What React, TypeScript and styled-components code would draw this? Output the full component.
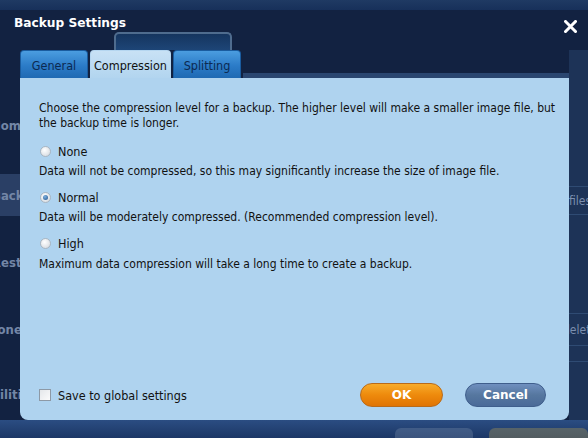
import React from "react";
import styled, { createGlobalStyle } from "styled-components";

const Global = createGlobalStyle`
  html, body { margin: 0; padding: 0; }
  body { width: 588px; height: 438px; overflow: hidden; background: #122241; }
  #root { width: 588px; height: 438px; }
`;

const FONT = `"DejaVu Sans Condensed", "DejaVu Sans", "Liberation Sans", sans-serif`;

/* ---------- background application (behind the dialog) ---------- */
const Page = styled.div`
  position: relative;
  width: 588px;
  height: 438px;
  overflow: hidden;
  background: #122241;
  font-family: ${FONT};
`;

const Backdrop = styled.div`
  display: flex;
  flex-direction: column;
  width: 100%;
  height: 100%;
`;

const AppHeader = styled.div`
  height: 10px;
  flex: none;
  background: linear-gradient(#1f3a63, #17305a);
`;

const AppHeaderGap = styled.div`
  height: 40px;
  flex: none;
  display: flex;
  align-items: flex-end;
`;

const HeaderButton = styled.div`
  margin-left: 114px;
  width: 118px;
  height: 18px;
  box-sizing: border-box;
  border: 2px solid #4f6c8e;
  border-bottom: none;
  border-radius: 5px 5px 0 0;
  background: linear-gradient(#15355f, #1d4577);
`;

const AppBody = styled.div`
  flex: 1;
  display: flex;
  min-height: 0;
`;

const Sidebar = styled.div`
  width: 60px;
  margin-left: -20px;
  flex: none;
  display: flex;
  flex-direction: column;
  padding-top: 55px;
`;

const SideItem = styled.div<{ $active?: boolean; $h: number; $indent?: number }>`
  height: ${(p) => p.$h}px;
  flex: none;
  display: flex;
  align-items: center;
  padding-left: ${(p) => p.$indent ?? 0}px;
  font-size: 13px;
  font-weight: bold;
  color: #7386a6;
  white-space: nowrap;
  background: ${(p) => (p.$active ? "#2a3f65" : "transparent")};
`;

const Main = styled.div`
  flex: 1;
`;

const RightCol = styled.div`
  width: 19px;
  flex: none;
  display: flex;
  flex-direction: column;
  padding-top: 23px;
  background: #1d3357;
`;

const RightRow = styled.div<{ $h: number; $shift?: number }>`
  height: ${(p) => p.$h}px;
  flex: none;
  box-sizing: border-box;
  border-bottom: 1px solid #2f4b73;
  display: flex;
  align-items: center;
  font-size: 12px;
  color: #7b8fae;
  white-space: nowrap;
  overflow: hidden;
  & > span {
    margin-left: ${(p) => p.$shift ?? 0}px;
  }
`;

const AppFooter = styled.div`
  height: 18px;
  flex: none;
  display: flex;
  align-items: flex-end;
  gap: 16px;
  padding-left: 395px;
  background: linear-gradient(#2b4d82, #1c3766);
`;

const FooterBtn = styled.div<{ $tone: string; $w: number }>`
  width: ${(p) => p.$w}px;
  height: 10px;
  border-radius: 6px 6px 0 0;
  background: ${(p) => p.$tone};
`;

/* ---------- dialog ---------- */
const Dialog = styled.div`
  position: absolute;
  inset: 0;
  display: flex;
  flex-direction: column;
  padding: 0 19px 18px 20px;
`;

const TitleBar = styled.div`
  height: 50px;
  flex: none;
  display: flex;
  align-items: flex-start;
  justify-content: space-between;
  padding-top: 15px;
  box-sizing: border-box;
  margin-left: -6px;
  margin-right: -14px;
`;

const Title = styled.div`
  font-family: "DejaVu Sans", sans-serif;
  font-weight: bold;
  font-size: 12.2px;
  line-height: 16px;
  color: #ffffff;
`;

const CloseBtn = styled.div`
  width: 26px;
  height: 26px;
  margin-top: -2px;
  display: flex;
  align-items: center;
  justify-content: center;
`;

const TabRow = styled.div`
  height: 28px;
  flex: none;
  display: flex;
  align-items: flex-end;
  gap: 2px;
  &::after {
    content: "";
    flex: 1;
    height: 5px;
    background: #2a4670;
  }
`;

const Tab = styled.div<{ $active?: boolean; $w: number }>`
  width: ${(p) => p.$w}px;
  height: 28px;
  box-sizing: border-box;
  border-radius: 4px 4px 0 0;
  display: flex;
  align-items: center;
  justify-content: center;
  padding-top: 1px;
  font-size: 12.5px;
  color: ${(p) => (p.$active ? "#111" : "#0c2a52")};
  background: ${(p) =>
    p.$active
      ? "linear-gradient(#c8e1f5, #b2d5ef)"
      : "linear-gradient(#4b9de0, #2b7bc7 55%, #1f69b3)"};
  border: 1px solid ${(p) => (p.$active ? "#b5d6f0" : "#1a5c9f")};
  border-bottom: none;
`;

const Panel = styled.div`
  flex: 1;
  display: flex;
  flex-direction: column;
  background: #afd3ef;
  border-radius: 0 0 8px 8px;
  padding: 23px 23px 13px 19px;
  color: #111;
  font-size: 12px;
`;

const Para = styled.div`
  line-height: 15px;
  white-space: nowrap;
`;

const OptionRow = styled.label<{ $mt: number }>`
  display: flex;
  align-items: center;
  gap: 7px;
  height: 16px;
  margin-top: ${(p) => p.$mt}px;
  margin-left: 1px;
  font-size: 12.5px;
`;

const Radio = styled.span<{ $checked?: boolean }>`
  width: 11px;
  height: 11px;
  border-radius: 50%;
  box-sizing: border-box;
  border: 1px solid #a9b6c2;
  background: radial-gradient(circle at 40% 35%, #ffffff, #d9dde2 80%);
  display: flex;
  align-items: center;
  justify-content: center;
  &::after {
    content: "";
    display: ${(p) => (p.$checked ? "block" : "none")};
    width: 5px;
    height: 5px;
    border-radius: 50%;
    background: radial-gradient(circle at 40% 35%, #7fb2e0, #1d4f8a);
  }
`;

const Desc = styled.div<{ $mt: number }>`
  line-height: 15px;
  white-space: nowrap;
  margin-top: ${(p) => p.$mt}px;
`;

const Footer = styled.div`
  margin-top: auto;
  display: flex;
  align-items: center;
  height: 24px;
`;

const CheckRow = styled.label`
  display: flex;
  align-items: center;
  gap: 7px;
  font-size: 12.5px;
  flex: 1;
`;

const CheckBox = styled.span`
  width: 12px;
  height: 12px;
  box-sizing: border-box;
  border: 1px solid #8d99a6;
  background: linear-gradient(135deg, #e4e7ea, #fbfbfb);
`;

const Button = styled.button<{ $variant: "ok" | "cancel"; $w: number }>`
  width: ${(p) => p.$w}px;
  height: 24px;
  border-radius: 12px;
  font-family: "DejaVu Sans", sans-serif;
  font-weight: bold;
  font-size: 12px;
  color: #fff;
  padding: 0;
  cursor: pointer;
  border: 1px solid ${(p) => (p.$variant === "ok" ? "#b86a1a" : "#3f5e8c")};
  background: ${(p) =>
    p.$variant === "ok"
      ? "linear-gradient(#f7ab2a, #ee8a0c 50%, #e07404)"
      : "linear-gradient(#6f8fbf, #56779f 50%, #4a6a98)"};
  & + & {
    margin-left: 22px;
  }
`;

export default function App() {
  return (
    <Page>
      <Global />
      <Backdrop>
        <AppHeader />
        <AppHeaderGap>
          <HeaderButton />
        </AppHeaderGap>
        <AppBody>
          <Sidebar>
            <SideItem $h={40} $indent={11}>Home</SideItem>
            <SideItem $h={29} />
            <SideItem $h={42} $indent={12} $active>Backup</SideItem>
            <SideItem $h={92} $indent={12}>Restore</SideItem>
            <SideItem $h={42} $indent={5}>Clone</SideItem>
            <SideItem $h={88} $indent={5}>Utilities</SideItem>
          </Sidebar>
          <Main />
          <RightCol>
            <RightRow $h={114} />
            <RightRow $h={28}><span>files</span></RightRow>
            <RightRow $h={99} />
            <RightRow $h={32} $shift={-6}><span>delete</span></RightRow>
            <RightRow $h={16} />
          </RightCol>
        </AppBody>
        <AppFooter>
          <FooterBtn $tone="rgba(120,140,170,0.35)" $w={78} />
          <FooterBtn $tone="rgba(150,140,90,0.45)" $w={100} />
        </AppFooter>
      </Backdrop>

      <Dialog>
        <TitleBar>
          <Title>Backup Settings</Title>
          <CloseBtn>
            <svg width="13" height="13" viewBox="0 0 13 13">
              <path d="M1.5 1.5 L11.5 11.5 M11.5 1.5 L1.5 11.5" stroke="#fff" strokeWidth="3" strokeLinecap="square" />
            </svg>
          </CloseBtn>
        </TitleBar>
        <TabRow>
          <Tab $w={68}>General</Tab>
          <Tab $w={81} $active>Compression</Tab>
          <Tab $w={68}>Splitting</Tab>
        </TabRow>
        <Panel>
          <Para>
            Choose the compression level for a backup. The higher level will make a smaller image file, but
            <br />
            the backup time is longer.
          </Para>
          <OptionRow $mt={12}>
            <Radio />
            None
          </OptionRow>
          <Desc $mt={5}>Data will not be compressed, so this may significantly increase the size of image file.</Desc>
          <OptionRow $mt={10}>
            <Radio $checked />
            Normal
          </OptionRow>
          <Desc $mt={5}>Data will be moderately compressed. (Recommended compression level).</Desc>
          <OptionRow $mt={10}>
            <Radio />
            High
          </OptionRow>
          <Desc $mt={6}>Maximum data compression will take a long time to create a backup.</Desc>
          <Footer>
            <CheckRow>
              <CheckBox />
              Save to global settings
            </CheckRow>
            <Button $variant="ok" $w={83}>OK</Button>
            <Button $variant="cancel" $w={81}>Cancel</Button>
          </Footer>
        </Panel>
      </Dialog>
    </Page>
  );
}
